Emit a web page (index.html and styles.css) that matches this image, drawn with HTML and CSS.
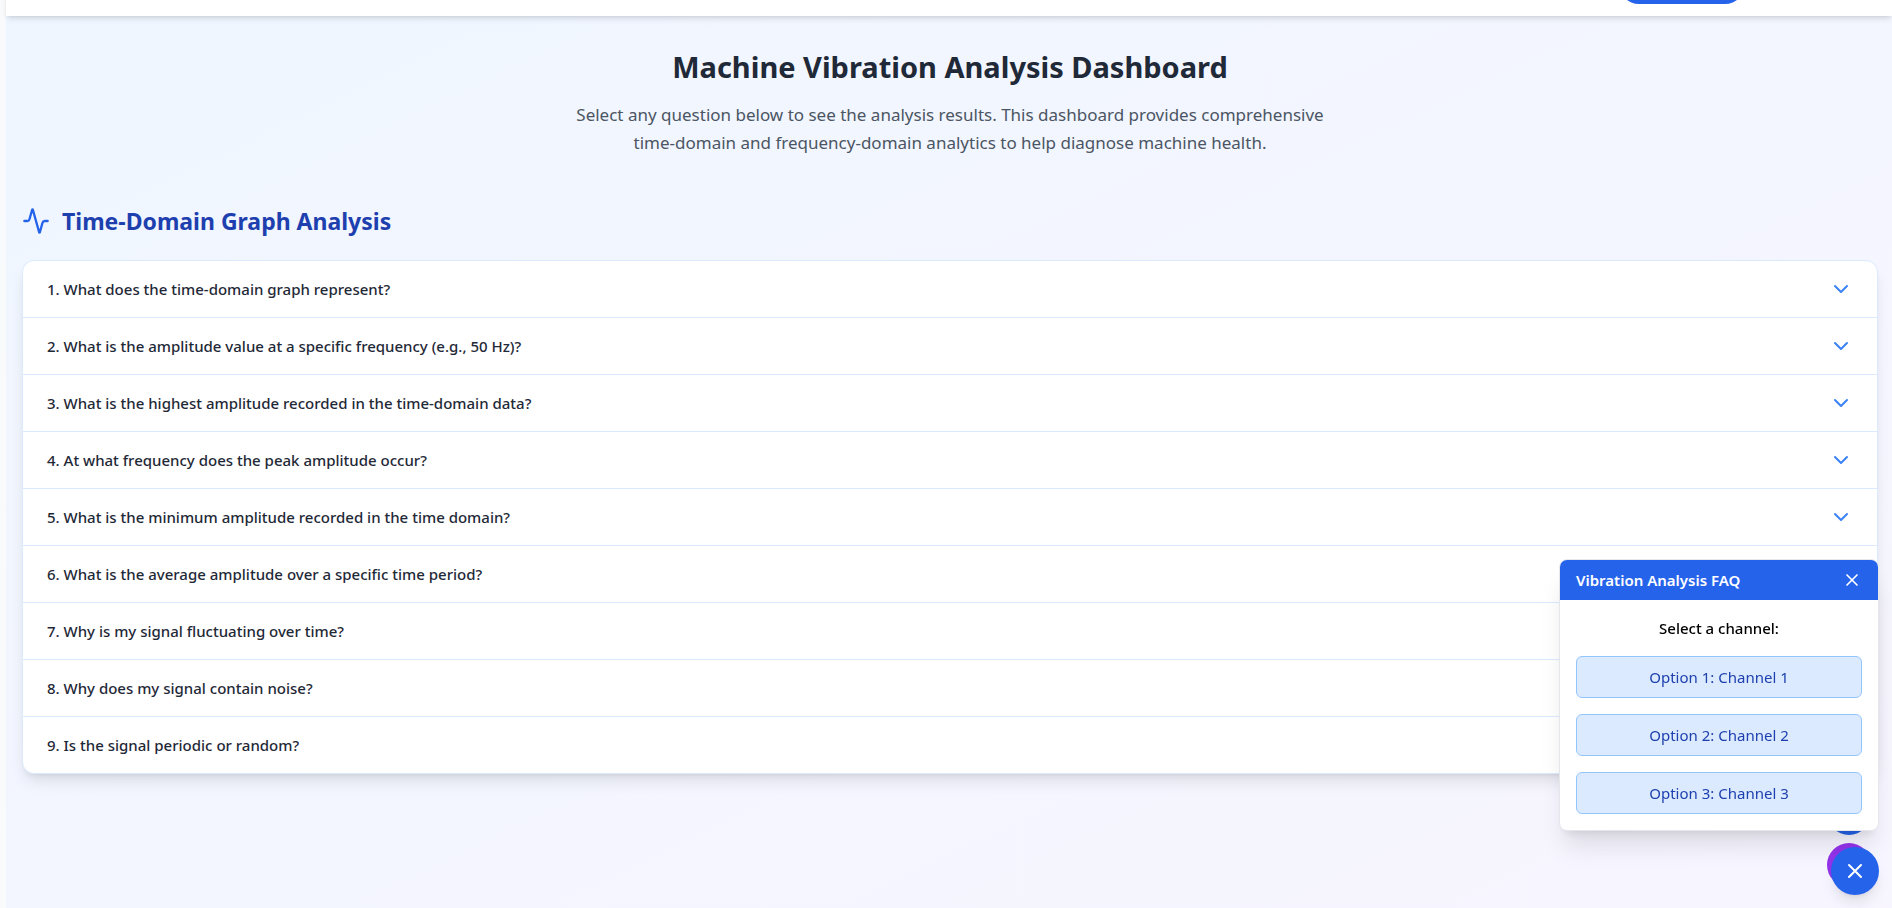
FILE: index.html
```html
<!DOCTYPE html>
<html lang="en">
<head>
<meta charset="utf-8">
<title>Machine Vibration Analysis Dashboard</title>
<meta name="viewport" content="width=device-width, initial-scale=1">
<link rel="stylesheet" href="styles.css">
</head>
<body>
<svg class="sprite" aria-hidden="true">
  <symbol id="chevron" viewBox="0 0 24 24"><path d="m6 9 6 6 6-6"/></symbol>
  <symbol id="cross" viewBox="0 0 24 24"><path d="M18 6 6 18M6 6l12 12"/></symbol>
  <symbol id="activity" viewBox="0 0 24 24"><path d="M22 12h-2.48a2 2 0 0 0-1.93 1.46l-2.35 8.36a.25.25 0 0 1-.48 0L9.24 2.18a.25.25 0 0 0-.48 0l-2.35 8.36A2 2 0 0 1 4.49 12H2"/></symbol>
</svg>
<div class="app">
  <div class="rail"></div>
  <div class="page">
    <header class="topbar">
      <button class="topbar-action" type="button" aria-label="Account"></button>
    </header>
    <main class="content">
      <div class="intro">
        <h1 class="title">Machine Vibration Analysis Dashboard</h1>
        <p class="lead">Select any question below to see the analysis results. This dashboard provides comprehensive time-domain and frequency-domain analytics to help diagnose machine health.</p>
      </div>
      <section>
        <h2 class="section-title"><svg class="icon section-icon" aria-hidden="true"><use href="#activity"/></svg>Time-Domain Graph Analysis</h2>
        <div class="accordion">
          <button class="question" type="button"><span>1. What does the time-domain graph represent?</span><svg class="icon chevron" aria-hidden="true"><use href="#chevron"/></svg></button>
          <button class="question" type="button"><span>2. What is the amplitude value at a specific frequency (e.g., 50 Hz)?</span><svg class="icon chevron" aria-hidden="true"><use href="#chevron"/></svg></button>
          <button class="question" type="button"><span>3. What is the highest amplitude recorded in the time-domain data?</span><svg class="icon chevron" aria-hidden="true"><use href="#chevron"/></svg></button>
          <button class="question" type="button"><span>4. At what frequency does the peak amplitude occur?</span><svg class="icon chevron" aria-hidden="true"><use href="#chevron"/></svg></button>
          <button class="question" type="button"><span>5. What is the minimum amplitude recorded in the time domain?</span><svg class="icon chevron" aria-hidden="true"><use href="#chevron"/></svg></button>
          <button class="question" type="button"><span>6. What is the average amplitude over a specific time period?</span><svg class="icon chevron" aria-hidden="true"><use href="#chevron"/></svg></button>
          <button class="question" type="button"><span>7. Why is my signal fluctuating over time?</span><svg class="icon chevron" aria-hidden="true"><use href="#chevron"/></svg></button>
          <button class="question" type="button"><span>8. Why does my signal contain noise?</span><svg class="icon chevron" aria-hidden="true"><use href="#chevron"/></svg></button>
          <button class="question" type="button"><span>9. Is the signal periodic or random?</span><svg class="icon chevron" aria-hidden="true"><use href="#chevron"/></svg></button>
        </div>
      </section>
    </main>
  </div>
</div>

<div class="quick-actions">
  <button class="quick quick-blue" type="button" aria-label="Scroll to top"></button>
  <button class="quick quick-purple" type="button" aria-label="Help"></button>
</div>

<div class="chat">
  <section class="faq" aria-labelledby="faq-title">
    <div class="faq-head">
      <h3 class="faq-title" id="faq-title">Vibration Analysis FAQ</h3>
      <button class="faq-close" type="button" aria-label="Close FAQ"><svg class="icon" aria-hidden="true"><use href="#cross"/></svg></button>
    </div>
    <div class="faq-body">
      <p class="faq-prompt">Select a channel:</p>
      <button class="option" type="button">Option 1: Channel 1</button>
      <button class="option" type="button">Option 2: Channel 2</button>
      <button class="option" type="button">Option 3: Channel 3</button>
    </div>
  </section>
  <button class="chat-toggle" type="button" aria-label="Close chat"><svg class="icon" aria-hidden="true"><use href="#cross"/></svg></button>
</div>
</body>
</html>
```
FILE: styles.css
```css
*, *::before, *::after { box-sizing: border-box; }

body {
  margin: 0;
  font: 15px/24px "Segoe UI", "Noto Sans", "Open Sans", sans-serif;
  color: #000;
  background: #f9fafb;
}

h1, h2, h3, p { margin: 0; }

button {
  margin: 0;
  padding: 0;
  border: 0;
  font: inherit;
  color: inherit;
  background: none;
  cursor: pointer;
}

.sprite { position: absolute; width: 0; height: 0; }

.icon {
  display: block;
  flex: none;
  width: 24px;
  height: 24px;
  fill: none;
  stroke: currentColor;
  stroke-width: 2;
  stroke-linecap: round;
  stroke-linejoin: round;
}

.app {
  display: flex;
  height: 100vh;
  overflow: hidden;
}

.rail { flex: none; width: 6px; background: #f9fafb; }

.page {
  flex: 1;
  min-width: 0;
  background: linear-gradient(to bottom right, #eff6ff, #faf5ff 130%);
}

.topbar {
  display: flex;
  justify-content: flex-end;
  align-items: center;
  height: 64px;
  margin-top: -48px;
  padding-right: 147px;
  background: #fff;
  box-shadow: 0 4px 6px -1px rgba(0, 0, 0, 0.1), 0 2px 4px -2px rgba(0, 0, 0, 0.1);
}

.topbar-action {
  width: 126px;
  height: 40px;
  border-radius: 20px;
  background: #2563eb;
}

.content { padding: 33px 14px 32px 16px; }

.intro { margin-bottom: 48px; text-align: center; }

.title {
  margin-bottom: 16px;
  font-size: 29px;
  line-height: 36px;
  font-weight: 700;
  color: #1f2937;
}

.lead {
  max-width: 768px;
  margin: 0 auto;
  font-size: 17px;
  line-height: 28px;
  color: #4b5563;
}

.section-title {
  display: flex;
  align-items: center;
  gap: 12px;
  margin-bottom: 23px;
  font-size: 23px;
  line-height: 32px;
  font-weight: 700;
  color: #1e40af;
}

.section-icon { width: 28px; height: 28px; color: #2563eb; }

.accordion {
  overflow: hidden;
  border: 1px solid #dbeafe;
  border-radius: 12px;
  background: #fff;
  box-shadow: 0 10px 15px -3px rgba(0, 0, 0, 0.1), 0 4px 6px -4px rgba(0, 0, 0, 0.1);
}

.question {
  display: flex;
  align-items: center;
  justify-content: space-between;
  width: 100%;
  padding: 16px 24px;
  font-weight: 500;
  text-align: left;
  color: #1f2937;
}

.question + .question { border-top: 1px solid #dbeafe; }

.chevron { color: #3b82f6; }

.quick-actions {
  position: fixed;
  right: 21px;
  bottom: 21px;
  display: flex;
  flex-direction: column;
  gap: 8px;
}

.quick { width: 44px; height: 44px; border-radius: 50%; }
.quick-blue { background: #2563eb; }
.quick-purple { background: #9333ea; }

.chat {
  position: fixed;
  right: 13px;
  bottom: 13px;
  display: flex;
  flex-direction: column;
  align-items: flex-end;
  gap: 16px;
}

.faq {
  width: 320px;
  overflow: hidden;
  border: 1px solid #e5e7eb;
  border-radius: 8px;
  background: #fff;
  box-shadow: 0 20px 25px -5px rgba(0, 0, 0, 0.1), 0 8px 10px -6px rgba(0, 0, 0, 0.1);
}

.faq-head {
  display: flex;
  align-items: center;
  justify-content: space-between;
  padding: 8px 16px;
  color: #fff;
  background: #2563eb;
}

.faq-title { font-size: 15px; line-height: 24px; font-weight: 600; }

.faq-close .icon { width: 20px; height: 20px; }

.faq-body {
  display: flex;
  flex-direction: column;
  gap: 16px;
  padding: 16px;
}

.faq-prompt { font-weight: 500; text-align: center; }

.option {
  padding: 8px 16px;
  border: 1px solid #93c5fd;
  border-radius: 6px;
  color: #1e40af;
  background: #dbeafe;
}

.chat-toggle {
  display: grid;
  place-items: center;
  width: 48px;
  height: 48px;
  border-radius: 50%;
  color: #fff;
  background: #2563eb;
  box-shadow: 0 10px 15px -3px rgba(0, 0, 0, 0.1), 0 4px 6px -4px rgba(0, 0, 0, 0.1);
}
```
